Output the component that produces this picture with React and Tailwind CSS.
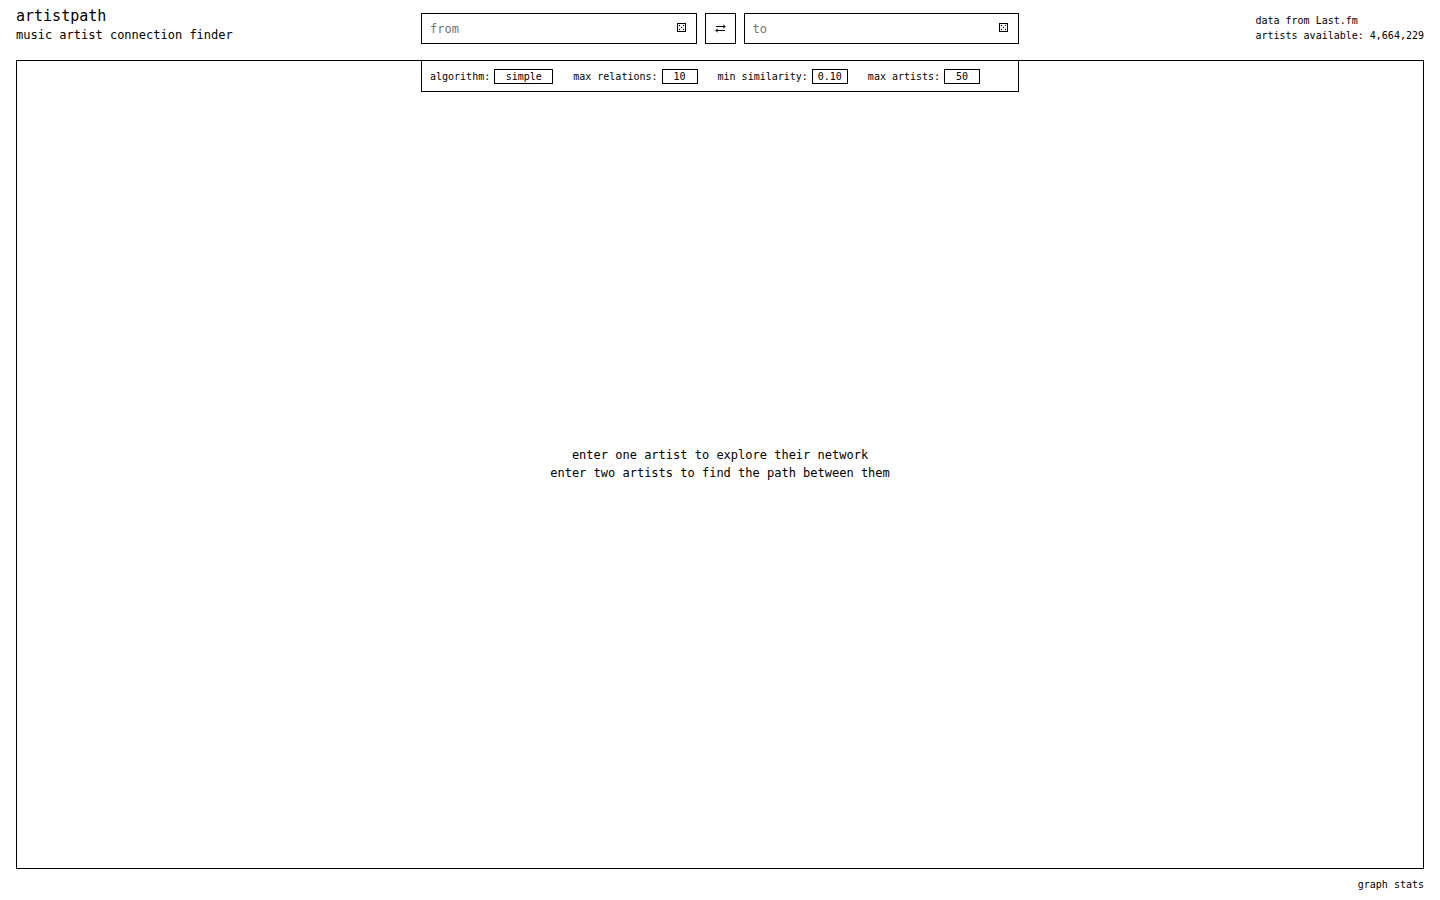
import { useState } from "react";

const DiceIcon = () => (
  <svg
    viewBox="0 0 9 9"
    className="mx-auto h-[9px] w-[9px]"
    fill="currentColor"
    aria-hidden="true"
  >
    <rect x="0.5" y="0.5" width="8" height="8" fill="none" stroke="currentColor" />
    <circle cx="2.5" cy="2.5" r="0.7" />
    <circle cx="6.5" cy="2.5" r="0.7" />
    <circle cx="4.5" cy="4.5" r="0.7" />
    <circle cx="2.5" cy="6.5" r="0.7" />
    <circle cx="6.5" cy="6.5" r="0.7" />
  </svg>
);

const SwapIcon = () => (
  <svg
    viewBox="0 0 11 9"
    className="mx-auto h-[9px] w-[11px]"
    fill="currentColor"
    aria-hidden="true"
  >
    <rect x="1" y="2" width="9" height="1" />
    <path d="M8 0.3L10.8 2.5L8 4.7L8.8 2.5z" />
    <rect x="1" y="6" width="9" height="1" />
    <path d="M3 4.3L0.2 6.5L3 8.7L2.2 6.5z" />
  </svg>
);

const ArtistInput = ({ label, value, onChange }) => {
  return (
    <div className="flex h-[31px] min-w-0 flex-1 items-center border border-black bg-white px-2">
      <input
        type="text"
        aria-label={label}
        placeholder={label}
        value={value}
        onChange={(e) => onChange(e.target.value)}
        className="min-w-0 flex-1 bg-transparent text-[12px] leading-4 outline-none placeholder:text-[#757575]"
      />
      <button
        type="button"
        aria-label={`random ${label} artist`}
        className="w-[13px] pb-0.5"
      >
        <DiceIcon />
      </button>
    </div>
  );
};

const NumberSetting = ({ id, label, value, onChange }) => {
  return (
    <div className="flex items-center gap-1">
      <label htmlFor={id}>{label}:</label>
      <input
        id={id}
        type="text"
        inputMode="decimal"
        value={value}
        onChange={(e) => onChange(e.target.value)}
        className="h-[15px] w-9 border border-black text-center text-[10px] leading-3 outline-none"
      />
    </div>
  );
};

const App = () => {
  const [from, setFrom] = useState("");
  const [to, setTo] = useState("");
  const [algorithm, setAlgorithm] = useState("simple");
  const [maxRelations, setMaxRelations] = useState("10");
  const [minSimilarity, setMinSimilarity] = useState("0.10");
  const [maxArtists, setMaxArtists] = useState("50");

  const swapArtists = () => {
    setFrom(to);
    setTo(from);
  };

  return (
    <div className="flex min-h-screen flex-col bg-white px-4 font-['DejaVu_Sans_Mono','Liberation_Mono',monospace] text-black">
      <header className="flex h-[60px] justify-between gap-4">
        <div className="flex-1 pt-[7px]">
          <h1 className="text-[15px] leading-[19px]">artistpath</h1>
          <p className="text-[12px] leading-[18px]">
            music artist connection finder
          </p>
        </div>

        <div className="flex w-full max-w-[598px] gap-2 pt-[13px]">
          <ArtistInput label="from" value={from} onChange={setFrom} />
          <button
            type="button"
            aria-label="swap artists"
            onClick={swapArtists}
            className="h-[31px] w-[31px] border border-black"
          >
            <SwapIcon />
          </button>
          <ArtistInput label="to" value={to} onChange={setTo} />
        </div>

        <div className="flex flex-1 justify-end pt-[13px] text-[10px] leading-[15px] whitespace-nowrap">
          <div>
            <p>
              data from <a href="https://www.last.fm">Last.fm</a>
            </p>
            <p>artists available: 4,664,229</p>
          </div>
        </div>
      </header>

      <main className="flex flex-1 flex-col items-center border border-black">
        <div className="flex min-h-[31px] w-full max-w-[598px] flex-wrap items-center gap-x-5 border border-t-0 border-black px-2 text-[10px] leading-[15px]">
          <div className="flex items-center gap-1">
            <label htmlFor="algorithm">algorithm:</label>
            <select
              id="algorithm"
              value={algorithm}
              onChange={(e) => setAlgorithm(e.target.value)}
              className="h-[15px] w-[59px] appearance-none border border-black text-center text-[10px] leading-[13px] outline-none"
            >
              <option value="simple">simple</option>
              <option value="weighted">weighted</option>
            </select>
          </div>
          <NumberSetting
            id="max-relations"
            label="max relations"
            value={maxRelations}
            onChange={setMaxRelations}
          />
          <NumberSetting
            id="min-similarity"
            label="min similarity"
            value={minSimilarity}
            onChange={setMinSimilarity}
          />
          <NumberSetting
            id="max-artists"
            label="max artists"
            value={maxArtists}
            onChange={setMaxArtists}
          />
        </div>

        <div className="flex flex-1 flex-col justify-center pb-8 text-center text-[12px] leading-[18px]">
          <p>enter one artist to explore their network</p>
          <p>enter two artists to find the path between them</p>
        </div>
      </main>

      <footer className="flex h-[31px] justify-end pt-2">
        <button type="button" className="h-[15px] text-[10px] leading-[15px]">
          graph stats
        </button>
      </footer>
    </div>
  );
};

export default App;
